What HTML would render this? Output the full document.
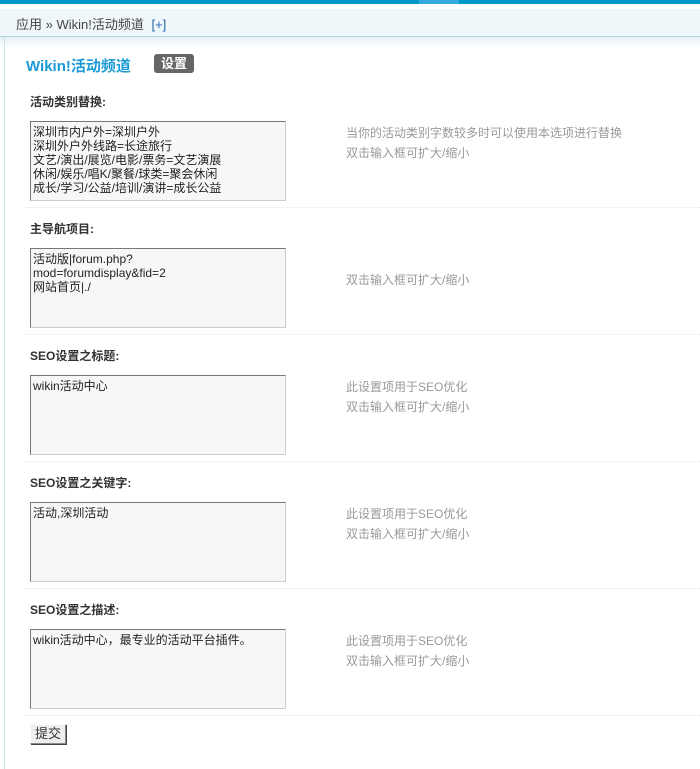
<!DOCTYPE html>
<html><head><meta charset="utf-8"><style>
*{margin:0;padding:0;box-sizing:border-box}
body{width:700px;height:769px;background:#fff;font:12px "Liberation Sans","Noto Sans CJK SC",sans-serif;color:#333;position:relative;overflow:hidden}
.top{position:absolute;left:0;top:0;width:700px;height:4px;background:#0099cc}
.top i{position:absolute;left:419px;width:40px;height:4px;background:#33aadd}
.nav{position:absolute;left:0;top:9px;width:700px;height:28px;background:#f0f7fb;border-bottom:1px solid #b3d3dd}
.nav span{position:absolute;left:16px;top:5px;font-size:13px;color:#444}
.nav b{font-weight:normal;color:#2366a8;margin-left:4px}
.grad{position:absolute;left:0;top:37px;width:700px;height:12px;background:linear-gradient(#e6f1f7,#fff)}
.lb{position:absolute;left:4px;top:37px;width:1px;height:732px;background:#cfe3ec}
.lb0{position:absolute;left:4px;top:9px;width:1px;height:28px;background:#cfe3ec}
h1{position:absolute;left:26px;top:55px;font-size:15px;color:#1a9ad6;font-weight:bold}
.set{position:absolute;left:154px;top:54px;width:40px;height:19px;background:#666;color:#fff;font-weight:bold;border-radius:3px;text-align:center;line-height:19px;font-size:13px}
.lab{position:absolute;left:30px;font-weight:bold;font-size:12px;color:#333}
.ta{position:absolute;left:30px;width:256px;height:80px;background:#f7f7f7;border:1px solid #777;border-right-color:#ccc;border-bottom-color:#ccc;padding:3px 2px;font-size:12px;line-height:14px;color:#222;white-space:pre}
.help{position:absolute;left:346px;color:#999;line-height:20px}
.hr{position:absolute;left:25px;width:675px;border-top:1px dotted #dde8ee}
.btn{position:absolute;left:30px;top:724px;width:36px;height:20px;background:#eee;border:1px solid #888;border-top-color:#fff;border-left-color:#fff;box-shadow:1px 1px 0 #444;text-align:center;line-height:18px;font-size:13px}
</style></head><body>
<div class="top"><i></i></div>
<div class="lb0"></div>
<div class="nav"><span>应用 » Wikin!活动频道 <b>[+]</b></span></div>
<div class="grad"></div>
<div class="lb"></div>
<h1>Wikin!活动频道</h1>
<div class="set">设置</div>

<div class="lab" style="top:93px">活动类别替换:</div>
<div class="ta" style="top:121px">深圳市内户外=深圳户外
深圳外户外线路=长途旅行
文艺/演出/展览/电影/票务=文艺演展
休闲/娱乐/唱K/聚餐/球类=聚会休闲
成长/学习/公益/培训/演讲=成长公益</div>
<div class="help" style="top:123px">当你的活动类别字数较多时可以使用本选项进行替换<br>双击输入框可扩大/缩小</div>
<div class="hr" style="top:207px"></div>

<div class="lab" style="top:220px">主导航项目:</div>
<div class="ta" style="top:248px">活动版|forum.php?
mod=forumdisplay&amp;fid=2
网站首页|./</div>
<div class="help" style="top:270px">双击输入框可扩大/缩小</div>
<div class="hr" style="top:334px"></div>

<div class="lab" style="top:347px">SEO设置之标题:</div>
<div class="ta" style="top:375px">wikin活动中心</div>
<div class="help" style="top:377px">此设置项用于SEO优化<br>双击输入框可扩大/缩小</div>
<div class="hr" style="top:461px"></div>

<div class="lab" style="top:474px">SEO设置之关键字:</div>
<div class="ta" style="top:502px">活动,深圳活动</div>
<div class="help" style="top:504px">此设置项用于SEO优化<br>双击输入框可扩大/缩小</div>
<div class="hr" style="top:588px"></div>

<div class="lab" style="top:601px">SEO设置之描述:</div>
<div class="ta" style="top:629px">wikin活动中心，最专业的活动平台插件。</div>
<div class="help" style="top:631px">此设置项用于SEO优化<br>双击输入框可扩大/缩小</div>
<div class="hr" style="top:715px"></div>

<div class="btn">提交</div>
</body></html>
